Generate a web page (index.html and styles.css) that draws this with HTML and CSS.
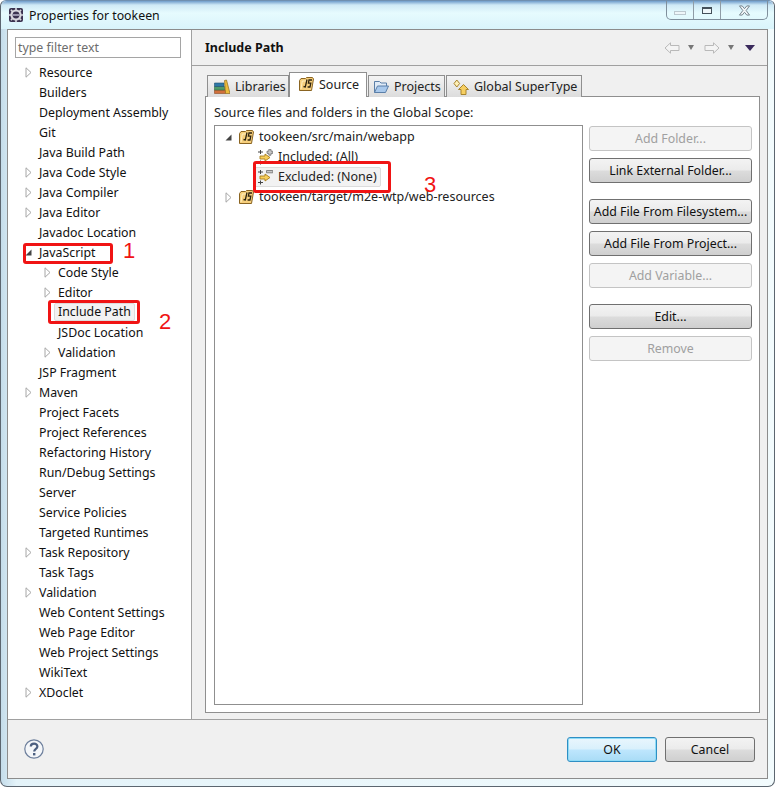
FILE: index.html
```html
<!DOCTYPE html>
<html lang="en">
<head>
<meta charset="utf-8">
<title>Properties for tookeen</title>
<link rel="stylesheet" href="styles.css">
</head>
<body>
<svg class="defs" width="0" height="0" aria-hidden="true">
  <defs>
    <symbol id="tri-open" viewBox="0 0 7 11"><path d="M1 .8 6 5.5 1 10.2Z" fill="#fff" stroke="#a6a6a6"/></symbol>
    <symbol id="tri-down" viewBox="0 0 7 7"><path d="M6.5 .5V6.5H.5Z" fill="#444"/></symbol>
    <symbol id="jsfolder" viewBox="0 0 16 16"><path d="M1.5 4.5 3 2.5H7.5L8.5 1.5H14.5L15.5 3 13.5 14.5H1.5Z" fill="#f6cf7c" stroke="#8a6422"/><path d="M3 13 4.3 5H8" fill="none" stroke="#fff0c4"/><path d="M5.5 10.5 7.3 11 9 3.5M14 4H11L10.4 7.2H12.8L12 11H9.6" fill="none" stroke="#2e2410" stroke-width="1.3"/></symbol>
    <symbol id="filter-add" viewBox="0 0 16 16"><path d="M1 3H6M3.5 1V5M1 13.5H6M3.5 11.5V15.5" stroke="#444" fill="none"/><path d="M3 7H8V5L13 8.5 8 12V10H3Z" fill="#f7cf5c" stroke="#a87d1c" stroke-width=".9"/><path d="M10 2.2H11.8V.4H14V2.2H15.8V4.4H14V6.2H11.8V4.4H10Z" fill="#c8c8c8" stroke="#6e6e6e" stroke-width=".8"/></symbol>
    <symbol id="filter-remove" viewBox="0 0 16 16"><path d="M1 3H6M3.5 1V5M1 13.5H6M3.5 11.5V15.5" stroke="#444" fill="none"/><path d="M3 7H8V5L13 8.5 8 12V10H3Z" fill="#f7cf5c" stroke="#a87d1c" stroke-width=".9"/><path d="M9.5 1.5H15.8V3.8H9.5Z" fill="#c8c8c8" stroke="#6e6e6e" stroke-width=".8"/></symbol>
  </defs>
</svg>
<div class="window">
  <header class="titlebar">
    <svg class="app-icon" viewBox="0 0 16 16" width="16" height="16"><rect x="1" y="1" width="14" height="14" rx="2" fill="#3b3350"/><circle cx="8" cy="8" r="5.6" fill="#d8d8de"/><path d="M8 .8V3M8 13V15.2M.8 8H3M13 8H15.2M2.9 2.9 4.4 4.4M11.6 11.6 13.1 13.1M2.9 13.1 4.4 11.6M11.6 4.4 13.1 2.9" stroke="#d8d8de" stroke-width="1.6"/><circle cx="8" cy="8" r="3.4" fill="#3b3350"/><rect x="4.6" y="7" width="6.8" height="2" fill="#9a96ad"/></svg>
    <span class="title">Properties for tookeen</span>
    <div class="controls">
      <span class="ctl ctl-min"><i class="min-glyph"></i></span>
      <span class="ctl ctl-max"><i class="max-glyph"></i></span>
      <span class="ctl ctl-close"><svg viewBox="0 0 14 12" width="13" height="11"><path d="M1.5 1H4.5L7 4 9.5 1H12.5L8.8 6 12.5 11H9.5L7 8 4.5 11H1.5L5.2 6Z" fill="#f2f6f8" stroke="#6f7c86"/></svg></span>
    </div>
  </header>
  <div class="client">
    <div class="main">
      <aside class="sidebar">
        <div class="filter">type filter text</div>
        <ul class="tree">
          <li class="row"><svg class="tw"><use href="#tri-open"/></svg>Resource</li>
          <li class="row"><span class="tw"></span>Builders</li>
          <li class="row"><span class="tw"></span>Deployment Assembly</li>
          <li class="row"><span class="tw"></span>Git</li>
          <li class="row"><span class="tw"></span>Java Build Path</li>
          <li class="row"><svg class="tw"><use href="#tri-open"/></svg>Java Code Style</li>
          <li class="row"><svg class="tw"><use href="#tri-open"/></svg>Java Compiler</li>
          <li class="row"><svg class="tw"><use href="#tri-open"/></svg>Java Editor</li>
          <li class="row"><span class="tw"></span>Javadoc Location</li>
          <li class="row"><svg class="tw tw-down"><use href="#tri-down"/></svg>JavaScript</li>
          <li class="row child"><svg class="tw"><use href="#tri-open"/></svg>Code Style</li>
          <li class="row child"><svg class="tw"><use href="#tri-open"/></svg>Editor</li>
          <li class="row child"><span class="tw"></span><span class="sel">Include Path</span></li>
          <li class="row child"><span class="tw"></span>JSDoc Location</li>
          <li class="row child"><svg class="tw"><use href="#tri-open"/></svg>Validation</li>
          <li class="row"><span class="tw"></span>JSP Fragment</li>
          <li class="row"><svg class="tw"><use href="#tri-open"/></svg>Maven</li>
          <li class="row"><span class="tw"></span>Project Facets</li>
          <li class="row"><span class="tw"></span>Project References</li>
          <li class="row"><span class="tw"></span>Refactoring History</li>
          <li class="row"><span class="tw"></span>Run/Debug Settings</li>
          <li class="row"><span class="tw"></span>Server</li>
          <li class="row"><span class="tw"></span>Service Policies</li>
          <li class="row"><span class="tw"></span>Targeted Runtimes</li>
          <li class="row"><svg class="tw"><use href="#tri-open"/></svg>Task Repository</li>
          <li class="row"><span class="tw"></span>Task Tags</li>
          <li class="row"><svg class="tw"><use href="#tri-open"/></svg>Validation</li>
          <li class="row"><span class="tw"></span>Web Content Settings</li>
          <li class="row"><span class="tw"></span>Web Page Editor</li>
          <li class="row"><span class="tw"></span>Web Project Settings</li>
          <li class="row"><span class="tw"></span>WikiText</li>
          <li class="row"><svg class="tw"><use href="#tri-open"/></svg>XDoclet</li>
        </ul>
      </aside>
      <section class="content">
        <div class="page-head">
          <h1>Include Path</h1>
          <div class="nav">
            <svg class="nav-arrow" viewBox="0 0 16 12"><path d="M1 6 6.5 .8V3.5H15V8.5H6.5V11.2Z" fill="#f4f4f4" stroke="#b9b9b9"/></svg>
            <i class="caret"></i>
            <svg class="nav-arrow nav-fwd" viewBox="0 0 16 12"><path d="M15 6 9.5 .8V3.5H1V8.5H9.5V11.2Z" fill="#f4f4f4" stroke="#b9b9b9"/></svg>
            <i class="caret"></i>
            <i class="caret caret-menu"></i>
          </div>
        </div>
        <div class="folder">
          <div class="tabs">
            <div class="tab tab-lib">
              <svg viewBox="0 0 16 16" width="16" height="16"><path d="M.5 11H11.5V14.5H.5Z" fill="#d2703c" stroke="#8a4a22" stroke-width=".6"/><path d="M.5 7.5H10.5V11H.5Z" fill="#4f9a68" stroke="#2f6a44" stroke-width=".6"/><path d="M.5 4H10V7.5H.5Z" fill="#2f78a8" stroke="#1f5070" stroke-width=".6"/><path d="M10.5 1.5 12.5 1 16 14.5H11.5Z" fill="#ecbc3c" stroke="#8f6a1a" stroke-width=".7"/></svg>
              Libraries
            </div>
            <div class="tab tab-src active">
              <svg viewBox="0 0 16 16" width="16" height="16"><use href="#jsfolder"/></svg>
              Source
            </div>
            <div class="tab tab-prj">
              <svg viewBox="0 0 16 16" width="16" height="16"><path d="M1.5 13.5V2.5H6.5L8 4H13.5V7" fill="#dfeaf6" stroke="#5b7fa8"/><path d="M1.5 13.5 4.5 7H15.5L12.5 13.5Z" fill="#a9c9ec" stroke="#5b7fa8"/></svg>
              Projects
            </div>
            <div class="tab tab-sup">
              <svg viewBox="0 0 16 16" width="16" height="16"><path d="M1 4.5 3.8 1 6.6 4.5 3.8 8Z" fill="#fff1b8" stroke="#a8842c"/><path d="M10.5 5.5 15.5 10.5H13V15.5H8V10.5H5.5Z" fill="#f6cf62" stroke="#a8842c"/></svg>
              Global SuperType
            </div>
          </div>
          <div class="panel">
            <div class="panel-label">Source files and folders in the Global Scope:</div>
            <div class="panel-body">
              <ul class="src-tree">
                <li class="src-row"><svg class="stw stw-down"><use href="#tri-down"/></svg><svg class="ic"><use href="#jsfolder"/></svg><span class="lbl">tookeen/src/main/webapp</span></li>
                <li class="src-row sub"><svg class="ic"><use href="#filter-add"/></svg><span class="lbl">Included: (All)</span></li>
                <li class="src-row sub"><span class="src-sel"><svg class="ic"><use href="#filter-remove"/></svg><span class="lbl">Excluded: (None)</span></span></li>
                <li class="src-row"><svg class="stw"><use href="#tri-open"/></svg><svg class="ic"><use href="#jsfolder"/></svg><span class="lbl">tookeen/target/m2e-wtp/web-resources</span></li>
              </ul>
              <div class="side-btns">
                <button class="btn" disabled>Add Folder...</button>
                <button class="btn">Link External Folder...</button>
                <button class="btn gap">Add File From Filesystem...</button>
                <button class="btn">Add File From Project...</button>
                <button class="btn" disabled>Add Variable...</button>
                <button class="btn gap">Edit...</button>
                <button class="btn" disabled>Remove</button>
              </div>
            </div>
          </div>
        </div>
      </section>
    </div>
    <footer class="footer">
      <svg class="help" viewBox="0 0 20 20" width="20" height="20"><circle cx="10" cy="10" r="9.2" fill="#f4f6f9" stroke="#6d7f9c" stroke-width="1.2"/><path d="M6.8 7.6C6.8 3.6 13.4 3.8 13.4 7.4 13.4 9.8 10.2 9.8 10.2 12.4" fill="none" stroke="#4c5f80" stroke-width="2.2"/><rect x="9" y="14" width="2.4" height="2.4" fill="#4c5f80"/></svg>
      <div class="foot-btns">
        <button class="btn btn-foot btn-default">OK</button>
        <button class="btn btn-foot">Cancel</button>
      </div>
    </footer>
  </div>
  <div class="mark mark-1"></div>
  <div class="mark mark-2"></div>
  <div class="mark mark-3"></div>
  <span class="num num-1">1</span>
  <span class="num num-2">2</span>
  <span class="num num-3">3</span>
</div>
</body>
</html>
```
FILE: styles.css
```css
* { box-sizing: border-box; }
html, body { margin: 0; padding: 0; background: #fff; }
body { width: 775px; height: 787px; overflow: hidden; font-family: "Noto Sans", "Open Sans", sans-serif; font-size: 12.35px; color: #1a1a1a; }
.defs { position: absolute; }
ul { list-style: none; margin: 0; padding: 0; }

.window { position: relative; width: 775px; height: 787px; display: flex; flex-direction: column; border: 1px solid #5c6670; border-top-color: #6f8fb0; border-radius: 6px 6px 7px 7px; background: linear-gradient(90deg, #c4dcea 0, #e4f3f9 2%, #f2fbfd 100%); }
.titlebar { height: 28px; flex: none; display: flex; align-items: center; padding-left: 7px; background: linear-gradient(180deg, #6f9ccb 0, #cfe9f6 4px, #e6fbfe 12px, #d9f4fb 28px); border-radius: 6px 6px 0 0; }
.app-icon { flex: none; }
.title { margin-left: 5px; color: #111; }
.controls { margin-left: auto; margin-right: 6px; align-self: flex-start; height: 19px; display: flex; border: 1px solid #7f8f9c; border-top: 0; border-radius: 0 0 5px 5px; }
.ctl { display: flex; align-items: center; justify-content: center; height: 100%; }
.ctl-min { width: 27px; border-right: 1px solid #8f9ca6; }
.ctl-max { width: 27px; border-right: 1px solid #8f9ca6; }
.ctl-close { width: 46px; }
.min-glyph { width: 12px; height: 4px; margin-top: 5px; border: 1px solid #bcc8cf; background: #eef6f9; }
.max-glyph { width: 10px; height: 7px; border: 1px solid #44505a; border-top-width: 2px; background: #eef6f9; }

.client { flex: 1; margin: 0 6px 7px; border: 1px solid #8c8c8c; display: flex; flex-direction: column; background: #f0f0f0; min-height: 0; }
.main { flex: 1; display: flex; min-height: 0; }
.sidebar { width: 184px; flex: none; background: #fff; border-right: 1px solid #a0a0a0; padding: 7px 0 0; }
.filter { width: 166px; height: 21px; margin: 0 0 4px 7px; border: 1px solid #a5a5a5; color: #6d6d6d; line-height: 19px; padding-left: 2px; }
.row { height: 20px; display: flex; align-items: center; padding-left: 17px; white-space: nowrap; color: #111; }
.row.child { padding-left: 36px; }
.tw { width: 7px; height: 11px; margin-right: 7px; flex: none; display: block; }
.tw-down { height: 7px; }
.sel { margin-left: -4px; height: 18px; line-height: 16px; padding: 0 3px; border: 1px solid #dcdcdc; border-radius: 2px; background: #f2f2f2; }

.content { flex: 1; min-width: 0; display: flex; flex-direction: column; }
.page-head { height: 36px; flex: none; display: flex; align-items: center; justify-content: space-between; padding: 0 12px 0 13px; border-bottom: 1px solid #a0a0a0; }
h1 { margin: 0; font-size: 12.5px; font-weight: 700; color: #111; }
.nav { display: flex; align-items: center; }
.nav-arrow { width: 16px; height: 12px; display: block; }
.nav-fwd { margin-left: 10px; }
.caret { width: 0; height: 0; margin-left: 8px; border: 3.5px solid transparent; border-top: 5px solid #777; border-bottom: 0; }
.caret-menu { margin-left: 11px; border-width: 5px; border-top: 6px solid #3a2a5c; border-bottom: 0; }

.folder { flex: 1; min-height: 0; display: flex; flex-direction: column; margin: 6px 7px 6px 13px; }
.tabs { height: 25px; flex: none; display: flex; align-items: flex-end; padding-left: 2px; margin-bottom: -1px; position: relative; z-index: 1; font-size: 12.5px; }
.tab { height: 22px; display: flex; align-items: center; gap: 5px; padding-left: 6px; border: 1px solid #8f8f8f; border-bottom: 0; background: linear-gradient(180deg, #f4f4f4, #dcdcdc); margin-right: 1px; color: #222; white-space: nowrap; }
.tab svg { flex: none; }
.tab-lib { width: 82px; margin-right: 0; }
.tab-src { width: 78px; padding-left: 8px; }
.tab-prj { width: 77px; padding-left: 4px; }
.tab-sup { width: 136px; }
.tab.active { height: 25px; background: #fff; padding-bottom: 2px; border-color: #8f8f8f; }
.panel { flex: 1; min-height: 0; background: #fff; border: 1px solid #8f8f8f; padding: 0 7px 7px 8px; display: flex; flex-direction: column; }
.panel-label { height: 28px; flex: none; padding-top: 6px; line-height: 18px; color: #222; font-size: 12.65px; }
.panel-body { flex: 1; min-height: 0; display: flex; gap: 6px; }
.src-tree { width: 369px; flex: none; border: 1px solid #8f8f8f; padding-top: 1px; font-size: 12.5px; }
.src-row { height: 20px; display: flex; align-items: center; padding-left: 10px; white-space: nowrap; color: #222; }
.src-row.sub { padding-left: 42px; }
.stw { width: 7px; height: 11px; flex: none; display: block; margin-right: 6px; }
.stw-down { height: 7px; }
.ic { width: 16px; height: 16px; flex: none; display: block; }
.lbl { margin-left: 5px; line-height: 14px; }
.src-sel { display: flex; align-items: center; height: 20px; margin-left: -3px; padding: 0 3px 0 2px; width: 127px; background: #f2f2f2; border: 1px solid #dcdcdc; border-radius: 2px; }
.side-btns { flex: 1; display: flex; flex-direction: column; gap: 7px; padding-top: 1px; }
.btn { height: 25px; flex: none; padding: 0; font: inherit; color: #111; border: 1px solid #707070; border-radius: 3px; background: linear-gradient(180deg, #f3f3f3 0, #ebebeb 48%, #dcdcdc 52%, #cfcfcf 100%); white-space: nowrap; }
.btn:disabled { color: #a0a0a0; border-color: #c4c4c4; background: #f4f4f4; }
.btn.gap { margin-top: 9px; }

.footer { height: 59px; flex: none; display: flex; align-items: center; justify-content: space-between; padding: 0 12px 0 16px; border-top: 1px solid #a0a0a0; background: #f0f0f0; }
.help { display: block; margin-bottom: 1px; }
.foot-btns { display: flex; gap: 8px; }
.btn-foot { width: 90px; }
.btn-default { border-color: #2f8fc4; box-shadow: inset 0 0 0 1px #8fdcf7; background: linear-gradient(180deg, #e9f6fd 0, #d9f0fc 48%, #bee6fd 52%, #a9dcf6 100%); }

.mark { position: absolute; border: 3px solid #f01414; border-radius: 3px; }
.mark-1 { left: 22px; top: 242px; width: 90px; height: 21px; }
.mark-2 { left: 47px; top: 299px; width: 92px; height: 24px; }
.mark-3 { left: 252px; top: 160px; width: 138px; height: 32px; }
.num { position: absolute; font-family: "Liberation Sans", sans-serif; font-size: 22px; line-height: 16px; color: #f01414; }
.num-1 { left: 122px; top: 242px; }
.num-2 { left: 158px; top: 313px; }
.num-3 { left: 423px; top: 176px; }
```
